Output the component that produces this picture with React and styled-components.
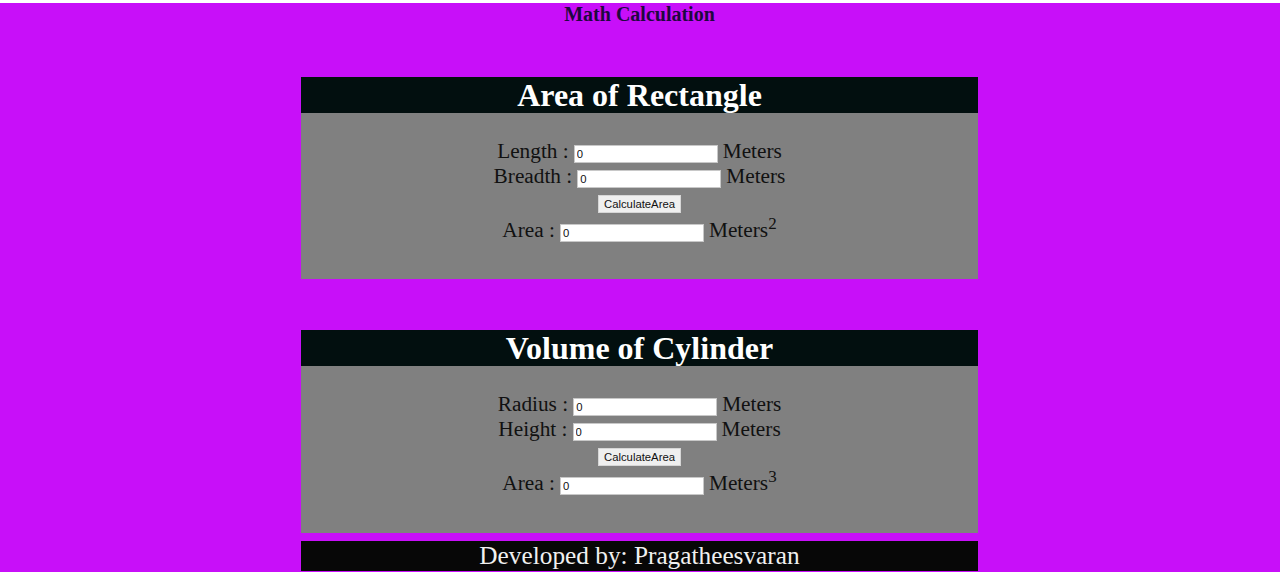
import React from "react";
import styled, { createGlobalStyle } from "styled-components";

const GlobalStyle = createGlobalStyle`
  html {
    background: #ffffff;
  }
  body {
    margin: 3px 0 0 0;
    background: #c80ff9;
    font-family: "Liberation Serif", "Times New Roman", serif;
    min-height: 569px;
  }
`;

const Page = styled.div`
  display: flex;
  flex-direction: column;
  align-items: center;
  padding-right: 1px;
`;

const PageTitle = styled.h3`
  margin: 0 0 51px 0;
  font-size: 20px;
  line-height: 23px;
  font-weight: bold;
  color: #1e0840;
  text-align: center;
`;

const Panel = styled.section`
  width: 677px;
  margin-bottom: ${(p) => p.$gap}px;
`;

const PanelHeader = styled.h1`
  margin: 0;
  height: 36px;
  background: #020f0f;
  color: #ffffff;
  font-size: 32px;
  line-height: 36px;
  font-weight: bold;
  text-align: center;
`;

const PanelBody = styled.div`
  background: #808080;
  padding: 26px 0 ${(p) => p.$bottom}px 0;
  display: flex;
  flex-direction: column;
  align-items: center;
`;

const Row = styled.div`
  display: flex;
  align-items: baseline;
  justify-content: center;
  gap: 5px;
  height: 25px;
  line-height: 25px;
  font-size: 21.3px;
  color: #111111;
  margin-top: ${(p) => p.$top || 0}px;
`;

const ButtonRow = styled.div`
  display: flex;
  justify-content: center;
  margin-top: 6px;
  height: 18px;
`;

const NumberInput = styled.input`
  box-sizing: border-box;
  width: 144px;
  height: 18px;
  padding: 0 2px;
  border: 1px solid #c8c8c8;
  background: #ffffff;
  font-family: "Liberation Sans", Arial, sans-serif;
  font-size: 11.3px;
  color: #111;
  outline: none;
`;

const Button = styled.button`
  box-sizing: border-box;
  height: 18px;
  padding: 0 5px;
  border: 1px solid #d6d6d6;
  border-radius: 0;
  background: #efefef;
  color: #111;
  font-family: "Liberation Sans", Arial, sans-serif;
  font-size: 11.3px;
  line-height: 16px;
  cursor: pointer;
`;

const Sup = styled.sup`
  font-size: 17px;
  line-height: 0;
  vertical-align: 8px;
`;

const Footer = styled.footer`
  width: 677px;
  height: 30px;
  background: #070707;
  color: #f0f0f0;
  font-size: 25.3px;
  line-height: 28px;
  text-align: center;
`;

function Calculator({ title, first, second, power, gap, bottom }) {
  return (
    <Panel $gap={gap}>
      <PanelHeader>{title}</PanelHeader>
      <PanelBody $bottom={bottom}>
        <Row>
          <span>{first} :</span>
          <NumberInput type="text" defaultValue="0" />
          <span>Meters</span>
        </Row>
        <Row>
          <span>{second} :</span>
          <NumberInput type="text" defaultValue="0" />
          <span>Meters</span>
        </Row>
        <ButtonRow>
          <Button type="button">CalculateArea</Button>
        </ButtonRow>
        <Row $top={4.5}>
          <span>Area :</span>
          <NumberInput type="text" defaultValue="0" />
          <span>
            Meters<Sup>{power}</Sup>
          </span>
        </Row>
      </PanelBody>
    </Panel>
  );
}

export default function App() {
  return (
    <>
      <GlobalStyle />
      <Page>
        <PageTitle>Math Calculation</PageTitle>
        <Calculator
          title="Area of Rectangle"
          first="Length"
          second="Breadth"
          power="2"
          gap={51}
          bottom={36.5}
        />
        <Calculator
          title="Volume of Cylinder"
          first="Radius"
          second="Height"
          power="3"
          gap={8}
          bottom={37.5}
        />
        <Footer>Developed by: Pragatheesvaran</Footer>
      </Page>
    </>
  );
}
